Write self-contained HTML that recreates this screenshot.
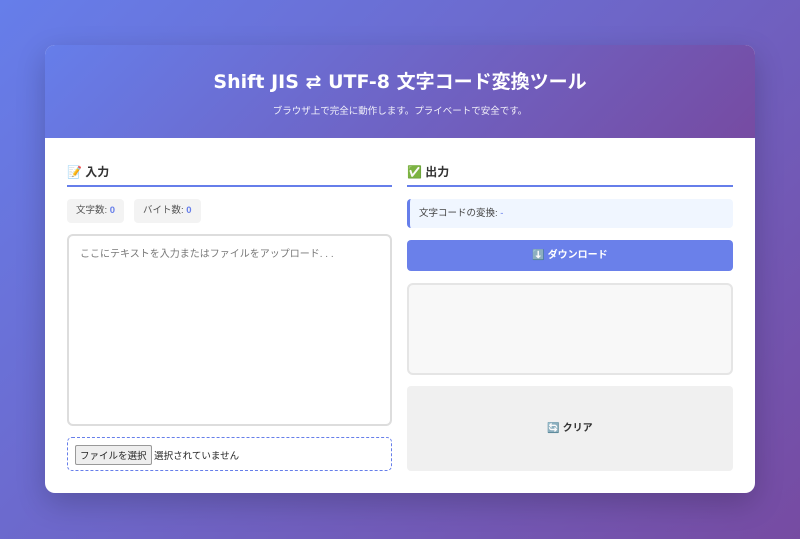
<!DOCTYPE html>
<html><head><meta charset="utf-8"><style>
*{box-sizing:border-box;margin:0;padding:0}
body{width:800px;height:539px;overflow:hidden;font-family:"Liberation Sans","Noto Sans CJK JP",sans-serif;background:linear-gradient(135deg,#667eea 0%,#764ba2 100%);position:relative}
.card{position:absolute;left:45px;top:45px;width:710px;height:448px;background:#fff;border-radius:10px;overflow:hidden;box-shadow:0 10px 30px rgba(0,0,0,.2)}
.hdr{position:absolute;left:0;top:0;width:710px;height:93px;background:linear-gradient(135deg,#667eea 0%,#764ba2 100%);color:#fff;text-align:center}
.hdr h1{position:absolute;top:22px;width:100%;font-size:19px;font-weight:bold;font-family:"DejaVu Sans","Noto Sans CJK JP",sans-serif}
.hdr p{position:absolute;top:58px;width:100%;font-size:9.5px;opacity:.9}
.a{position:absolute}
h2{font-size:12px;font-weight:bold;color:#333}
.line{height:2px;background:#667eea}
.stat{background:#f3f3f3;border-radius:4px;font-size:9.5px;color:#555;padding:0 9px;line-height:24px;white-space:nowrap}
.stat b{color:#667eea}
</style></head><body>
<div class="card">
<div class="hdr"><h1>Shift JIS ⇄ UTF-8 文字コード変換ツール</h1><p>ブラウザ上で完全に動作します。プライベートで安全です。</p></div>
<h2 class="a" style="left:22px;top:118px">📝 入力</h2>
<div class="a line" style="left:22px;top:140px;width:325px"></div>
<h2 class="a" style="left:362px;top:118px">✅ 出力</h2>
<div class="a line" style="left:362px;top:140px;width:326px"></div>
<div class="a stat" style="left:22px;top:154px">文字数: <b>0</b></div>
<div class="a stat" style="left:89px;top:154px">バイト数: <b>0</b></div>
<div class="a" style="left:22px;top:189px;width:325px;height:192px;border:2px solid #ddd;border-radius:6px;font-size:10px;color:#777;padding:9px 11px">ここにテキストを入力またはファイルをアップロード. . .</div>
<div class="a" style="left:22px;top:392px;width:325px;height:34px;border:1px dashed #667eea;border-radius:5px;font-size:9.5px;color:#222;padding:7px 7px">
<span style="display:inline-block;border:1px solid #999;background:#eee;border-radius:2px;padding:2px 4px">ファイルを選択</span> 選択されていません</div>
<div class="a" style="left:362px;top:154px;width:326px;height:29px;background:#f0f6ff;border-left:3px solid #667eea;border-radius:4px;font-size:9.5px;color:#444;padding-left:9px;line-height:29px">文字コードの変換: <span style="color:#667eea">-</span></div>
<div class="a" style="left:362px;top:195px;width:326px;height:31px;background:#6a80ea;border-radius:4px;color:#fff;font-size:10px;font-weight:bold;text-align:center;line-height:31px">⬇️ ダウンロード</div>
<div class="a" style="left:362px;top:238px;width:326px;height:92px;background:#f8f8f8;border:2px solid #e5e5e5;border-radius:6px"></div>
<div class="a" style="left:362px;top:341px;width:326px;height:85px;background:#f0f0f0;border-radius:4px;color:#333;font-size:10px;font-weight:bold;text-align:center;line-height:85px">🔄 クリア</div>
</div>
</body></html>
